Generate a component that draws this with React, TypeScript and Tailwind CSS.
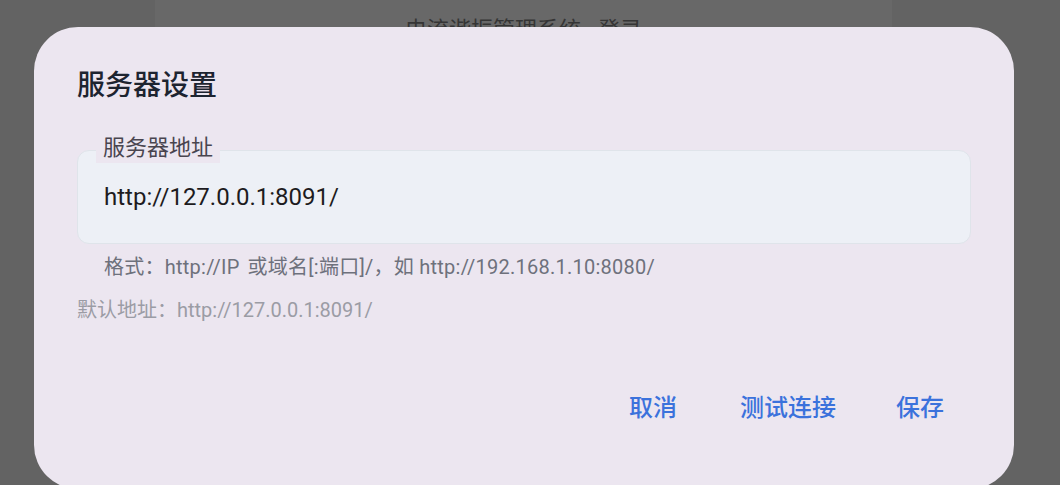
export default function App() {
  return (
    <div
      className="relative w-full h-[485px] overflow-hidden bg-[#636363]"
      style={{ fontFamily: 'Roboto, "Noto Sans CJK SC", sans-serif' }}
    >
      {/* page behind the scrim */}
      <div className="absolute left-[155px] top-0 bottom-0 w-[737px] bg-[#686868]">
        <div className="pt-[16px] text-center text-[22px] leading-[28px] text-[#353535]">
          电流谐振管理系统 - 登录
        </div>
      </div>

      {/* dialog */}
      <div className="absolute left-[34px] top-[27px] w-[980px] h-[462px] rounded-[44px] bg-[#ece6f0] px-[43px] pt-[41px] flex flex-col">
        <h2 className="text-[28px] leading-[36px] font-medium text-[#1d2430]">服务器设置</h2>

        <div className="relative mt-[46px] h-[94px] rounded-[12px] border-[1.5px] border-[#dfe4ea] bg-[#edf0f6] flex items-center pl-[26px]">
          <span className="absolute left-[18px] top-[-14px] px-[7px] pb-[4px] bg-[#ece6f0] text-[22px] leading-[22px] text-[#49454f]">
            服务器地址
          </span>
          <span className="text-[24px] leading-[32px] text-[#1d1b20]">http://127.0.0.1:8091/</span>
        </div>

        <p className="mt-[10px] pl-[27px] text-[20px] leading-[26px] tracking-[0.25px] text-[#6e717c]">
          格式：http://IP<span className="ml-[8px]">或域名[:端口]/，如 http://192.168.1.10:8080/</span>
        </p>
        <p className="mt-[17px] text-[20px] leading-[26px] text-[#9b9ca5]">默认地址：http://127.0.0.1:8091/</p>

        <div className="mt-[69px] flex justify-end gap-[12px] pr-[3px]">
          <button className="mr-[3px] px-[24px] text-[24px] leading-[32px] font-medium text-[#3b72dc]">取消</button>
          <button className="px-[24px] text-[24px] leading-[32px] font-medium text-[#3b72dc]">测试连接</button>
          <button className="px-[24px] text-[24px] leading-[32px] font-medium text-[#3b72dc]">保存</button>
        </div>
      </div>
    </div>
  );
}
